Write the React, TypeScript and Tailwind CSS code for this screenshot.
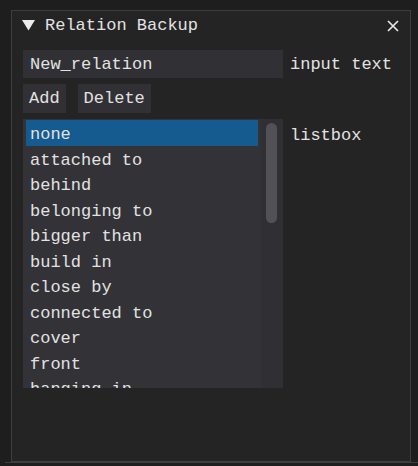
import React from "react";

const items = [
  "none",
  "attached to",
  "behind",
  "belonging to",
  "bigger than",
  "build in",
  "close by",
  "connected to",
  "cover",
  "front",
  "hanging in",
];

export default function App() {
  return (
    <div
      className="w-[418px] h-[466px] bg-[#1e1e1e] pt-[10px] pl-[11px] text-[17px] text-[#e2e2e2] overflow-hidden"
      style={{ fontFamily: '"Liberation Mono", "DejaVu Sans Mono", monospace' }}
    >
      <div className="w-[400px] h-[452px] border border-[#3e3e3e] bg-[#242424]">
        {/* title bar */}
        <div className="h-[28px] flex items-center pl-[10px] pr-[10px]">
          <svg width="13" height="11" viewBox="0 0 13 11" className="mt-[1px]">
            <polygon points="0,0 13,0 6.5,10.5" fill="#ececec" />
          </svg>
          <span className="ml-[10px] leading-none">Relation Backup</span>
          <svg width="12" height="12" viewBox="0 0 12 12" className="ml-auto mt-[1px] mr-[1px]">
            <path d="M1 1 L11 11 M11 1 L1 11" stroke="#e6e6e6" strokeWidth="1.7" />
          </svg>
        </div>

        <div className="pl-[11px] pt-[11px] flex flex-col gap-[6px]">
          {/* input text */}
          <div className="flex items-center gap-[7px]">
            <div className="w-[260px] h-[28px] bg-[#313135] flex items-center pl-[7px] pt-[2px]">
              New_relation
            </div>
            <span className="pt-[2px]">input text</span>
          </div>

          {/* buttons */}
          <div className="flex gap-[12px]">
            <div className="h-[29px] px-[6px] bg-[#313135] flex items-center pt-[1px]">Add</div>
            <div className="h-[29px] px-[6px] bg-[#313135] flex items-center pt-[1px]">Delete</div>
          </div>

          {/* listbox */}
          <div className="flex items-start gap-[7px]">
            <div className="w-[260px] h-[269px] bg-[#323237] flex overflow-hidden">
              <div className="flex-1 pl-[3px] pt-[1px] overflow-hidden">
                {items.map((it, i) => (
                  <div
                    key={it}
                    className={
                      "h-[25.5px] leading-[25.5px] pl-[4px] pt-[2px] w-[232px] whitespace-pre " +
                      (i === 0 ? "bg-[#155b8f]" : "")
                    }
                  >
                    {it}
                  </div>
                ))}
              </div>
              <div className="w-[22px] bg-[#303034] pt-[4px] pl-[5px]">
                <div className="w-[11px] h-[100px] rounded-full bg-[#515156]" />
              </div>
            </div>
            <span className="leading-[25.5px] pt-[4px]">listbox</span>
          </div>
        </div>
      </div>
      <div className="-ml-[6px] border-t border-[#3e3e3e] h-[10px]" />
    </div>
  );
}
